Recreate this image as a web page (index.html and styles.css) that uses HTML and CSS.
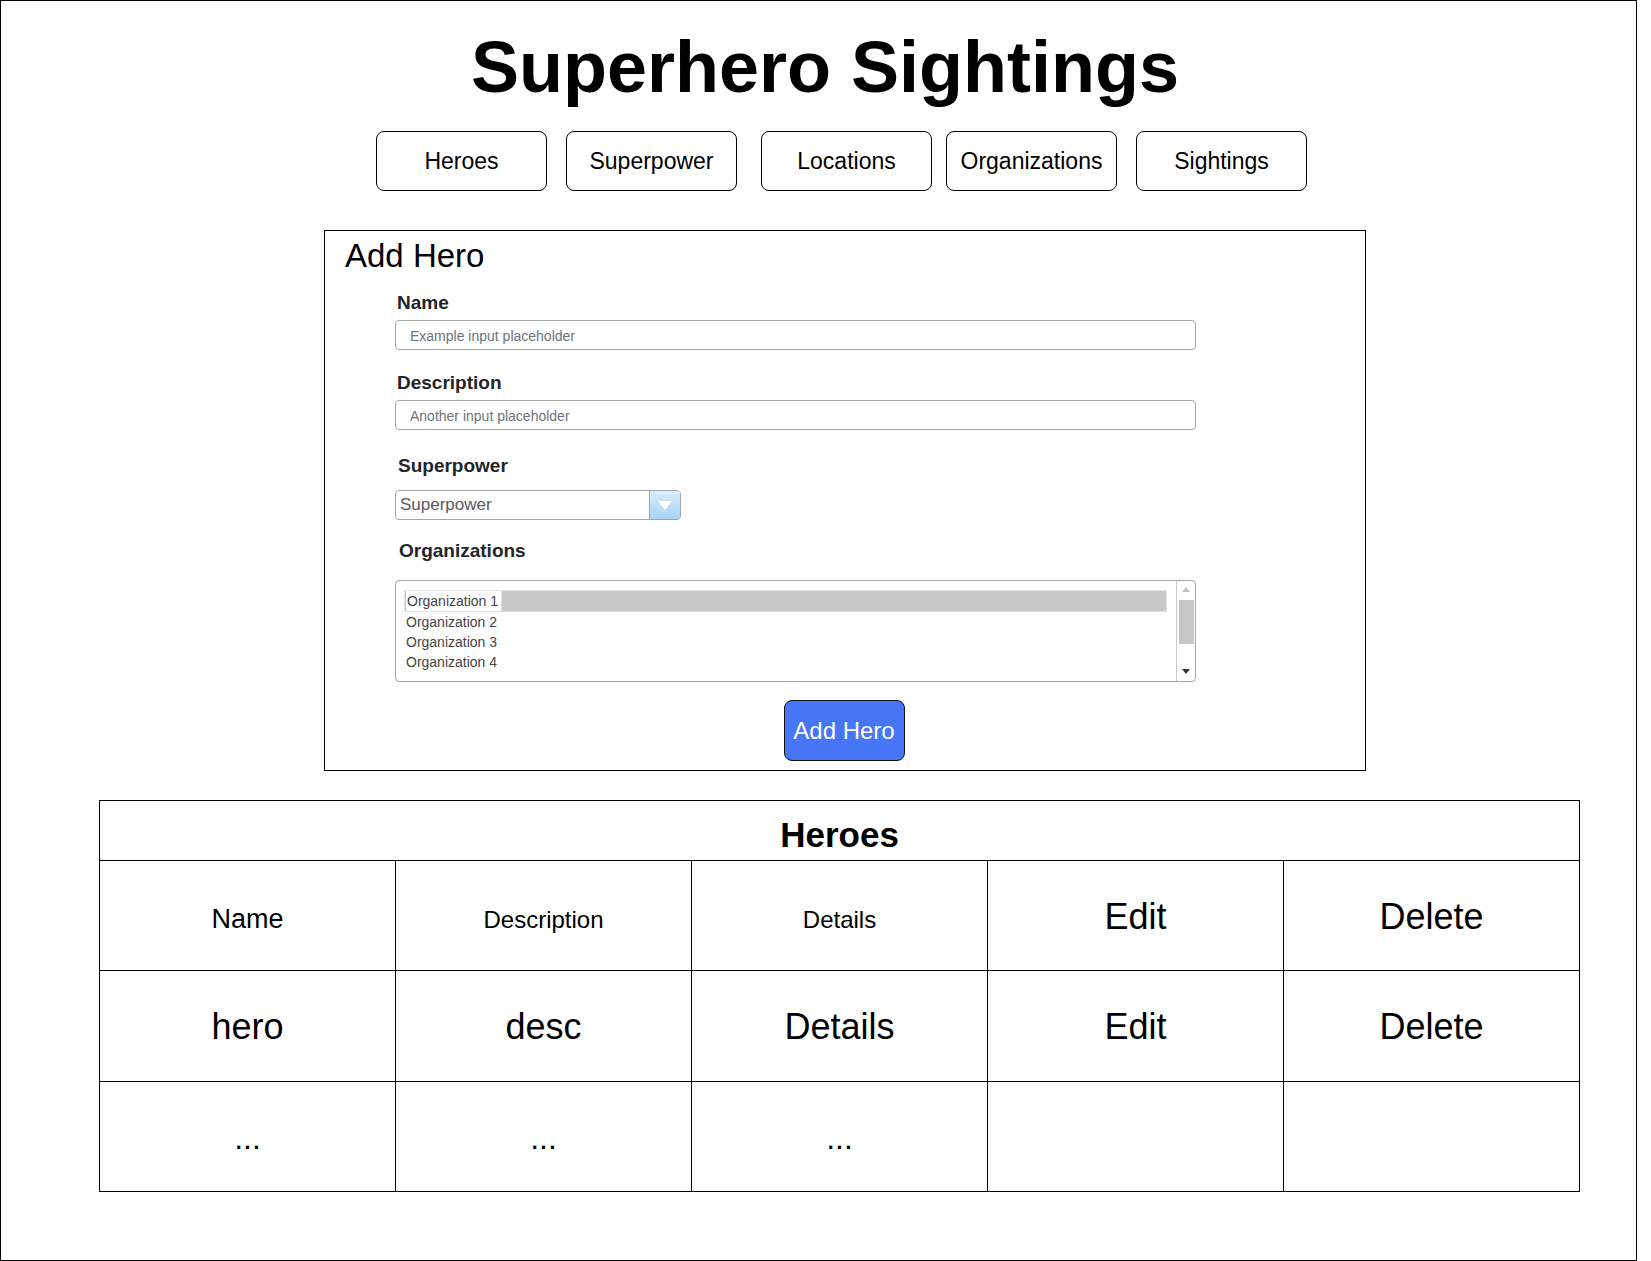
FILE: index.html
```html
<!DOCTYPE html>
<html lang="en">
<head>
<meta charset="utf-8">
<title>Superhero Sightings</title>
<link rel="stylesheet" href="styles.css">
</head>
<body>
<div class="frame">
  <h1 class="title">Superhero Sightings</h1>

  <nav class="nav">
    <a class="nav-btn">Heroes</a>
    <a class="nav-btn">Superpower</a>
    <a class="nav-btn nav-btn--push">Locations</a>
    <a class="nav-btn nav-btn--pull">Organizations</a>
    <a class="nav-btn">Sightings</a>
  </nav>

  <section class="form-card">
    <h2 class="form-title">Add Hero</h2>
    <div class="fields">
      <label class="label label--name">Name</label>
      <input class="text-input" type="text" placeholder="Example input placeholder">

      <label class="label label--desc">Description</label>
      <input class="text-input" type="text" placeholder="Another input placeholder">

      <label class="label label--power">Superpower</label>
      <div class="select">
        <span class="select-text">Superpower</span>
        <span class="select-arrow"><span class="tri-down"></span></span>
      </div>

      <label class="label label--orgs">Organizations</label>
      <div class="listbox">
        <ul class="list-items">
          <li class="list-item list-item--selected"><span class="sel-text">Organization 1</span></li>
          <li class="list-item">Organization 2</li>
          <li class="list-item">Organization 3</li>
          <li class="list-item">Organization 4</li>
        </ul>
        <div class="scrollbar">
          <span class="sb-up"></span>
          <span class="sb-thumb"></span>
          <span class="sb-space"></span>
          <span class="sb-down"></span>
        </div>
      </div>
    </div>
    <button class="add-btn" type="button">Add Hero</button>
  </section>

  <table class="heroes">
    <colgroup>
      <col class="col"><col class="col"><col class="col"><col class="col"><col class="col">
    </colgroup>
    <thead>
      <tr class="row-caption"><th class="caption-cell" colspan="5">Heroes</th></tr>
      <tr class="row-head">
        <th class="h-name">Name</th>
        <th class="h-small">Description</th>
        <th class="h-small">Details</th>
        <th class="h-big">Edit</th>
        <th class="h-big">Delete</th>
      </tr>
    </thead>
    <tbody>
      <tr class="row-body">
        <td class="cell-big">hero</td>
        <td class="cell-big">desc</td>
        <td class="cell-big">Details</td>
        <td class="cell-big">Edit</td>
        <td class="cell-big">Delete</td>
      </tr>
      <tr class="row-last">
        <td class="cell-dots">...</td>
        <td class="cell-dots">...</td>
        <td class="cell-dots">...</td>
        <td class="cell-dots"></td>
        <td class="cell-dots"></td>
      </tr>
    </tbody>
  </table>
</div>
</body>
</html>
```

FILE: styles.css
```css
html, body {
  margin: 0;
  padding: 0;
  background: #fff;
}

.frame {
  box-sizing: border-box;
  width: 1637px;
  height: 1261px;
  border: 1px solid #000;
  display: flex;
  flex-direction: column;
  align-items: flex-start;
  font-family: "Liberation Sans", Arial, sans-serif;
  color: #000;
}

.title {
  align-self: stretch;
  margin: 30px 0 0;
  padding-left: 13px;
  text-align: center;
  font-size: 72px;
  line-height: 72px;
  font-weight: 700;
}

.nav {
  display: flex;
  gap: 19px;
  margin: 28px 0 0 375px;
}

.nav-btn {
  box-sizing: border-box;
  width: 171px;
  height: 60px;
  border: 1px solid #000;
  border-radius: 8px;
  display: flex;
  align-items: center;
  justify-content: center;
  font-size: 23px;
  color: #000;
}

.nav-btn--push { margin-left: 5px; }
.nav-btn--pull { margin-left: -5px; }

.form-card {
  box-sizing: border-box;
  width: 1042px;
  height: 541px;
  margin: 39px 0 0 323px;
  border: 1px solid #000;
  padding: 7px 20px 0;
  display: flex;
  flex-direction: column;
}

.form-title {
  margin: 0;
  font-size: 33px;
  line-height: 36px;
  font-weight: 400;
}

.fields {
  display: flex;
  flex-direction: column;
  align-items: flex-start;
  margin-left: 50px;
}

.label {
  display: block;
  font-size: 19px;
  line-height: 22px;
  font-weight: 700;
  color: #212529;
  margin-left: 2px;
}

.label--name { margin-top: 18px; margin-bottom: 6px; }
.label--desc { margin-top: 22px; margin-bottom: 6px; }
.label--power { margin-top: 25px; margin-bottom: 13px; margin-left: 3px; }
.label--orgs { margin-top: 20px; margin-bottom: 18px; margin-left: 4px; }

.text-input {
  box-sizing: border-box;
  width: 801px;
  height: 30px;
  margin: 0;
  padding: 1px 14px 0;
  border: 1px solid #a3a3a3;
  border-radius: 4px;
  font-family: "Liberation Sans", Arial, sans-serif;
  font-size: 14px;
  color: #495057;
  background: #fff;
  outline: none;
}

.text-input::placeholder {
  color: #6c757d;
  opacity: 1;
}

.select {
  box-sizing: border-box;
  width: 286px;
  height: 30px;
  border: 1px solid #a3a3a3;
  border-radius: 4px;
  display: flex;
  overflow: hidden;
}

.select-text {
  flex: 1;
  padding-left: 4px;
  font-size: 17px;
  line-height: 28px;
  color: #5a5a5a;
}

.select-arrow {
  width: 30px;
  border-left: 1px solid #a3a3a3;
  background: linear-gradient(to bottom, #d9edfc, #a6d3f6);
  display: flex;
  align-items: center;
  justify-content: center;
}

.tri-down {
  width: 0;
  height: 0;
  border-left: 7px solid transparent;
  border-right: 7px solid transparent;
  border-top: 9px solid #fff;
}

.listbox {
  box-sizing: border-box;
  width: 801px;
  height: 102px;
  border: 1px solid #a3a3a3;
  border-radius: 4px;
  display: flex;
  overflow: hidden;
}

.list-items {
  flex: 1;
  list-style: none;
  margin: 0;
  padding: 9px 9px 0 8px;
}

.list-item {
  font-size: 14px;
  line-height: 20px;
  height: 20px;
  color: #454545;
  padding-left: 2px;
}

.list-item--selected {
  background: #c8c8c8;
  border: 1px solid #e2e2e2;
  padding-left: 1px;
}

.sel-text {
  display: inline-block;
  background: #fff;
  padding: 0 3px 0 1px;
  border-right: 1px solid #e2e2e2;
}

.scrollbar {
  width: 18px;
  border-left: 1px solid #c9c9c9;
  display: flex;
  flex-direction: column;
  align-items: center;
}

.sb-up {
  margin-top: 6px;
  width: 0;
  height: 0;
  border-left: 4px solid transparent;
  border-right: 4px solid transparent;
  border-bottom: 5px solid #c0c0c0;
}

.sb-thumb {
  margin-top: 8px;
  width: 15px;
  height: 44px;
  background: #c6c6c6;
}

.sb-space { flex: 1; }

.sb-down {
  margin-bottom: 7px;
  width: 0;
  height: 0;
  border-left: 4px solid transparent;
  border-right: 4px solid transparent;
  border-top: 5px solid #333;
}

.add-btn {
  align-self: center;
  box-sizing: border-box;
  width: 121px;
  height: 61px;
  margin: 18px 0 0 -2px;
  background: #4675f5;
  border: 1px solid #111;
  border-radius: 8px;
  color: #fff;
  font-family: "Liberation Sans", Arial, sans-serif;
  font-size: 24px;
  padding: 0;
}

.heroes {
  margin: 29px 0 0 98px;
  border-collapse: collapse;
  table-layout: fixed;
  width: 1481px;
}

.col { width: 296px; }

.heroes th,
.heroes td {
  border: 1px solid #000;
  padding: 0;
  text-align: center;
  vertical-align: middle;
  font-weight: 400;
}

.row-caption { height: 60px; }
.row-head { height: 110px; }
.row-body { height: 111px; }
.row-last { height: 110px; }

.heroes .caption-cell {
  font-size: 35px;
  font-weight: 700;
  padding-top: 8px;
}

.heroes .h-name { font-size: 27px; padding-top: 8px; }
.heroes .h-small { font-size: 24px; padding-top: 9px; }
.heroes .h-big { font-size: 36px; padding-top: 2px; }
.heroes .cell-big { font-size: 36px; padding-top: 2px; }
.heroes .cell-dots { font-size: 32px; padding-top: 4px; }
```
